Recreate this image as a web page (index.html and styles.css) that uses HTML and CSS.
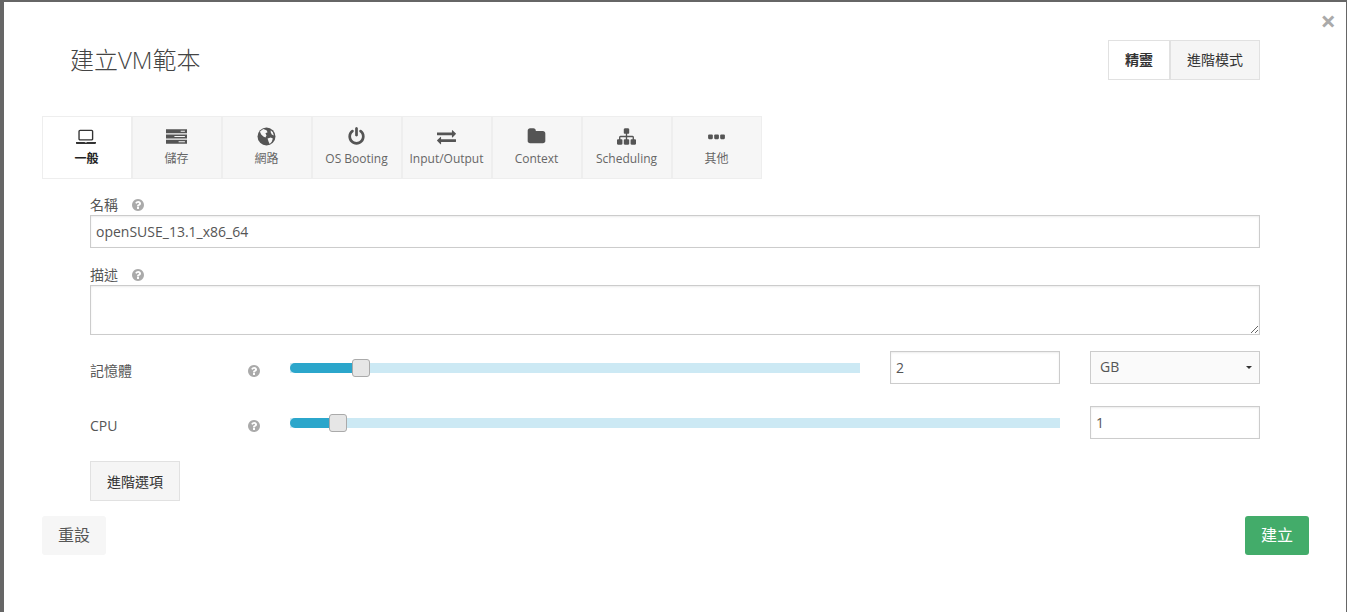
FILE: index.html
```html
<!DOCTYPE html>
<html lang="zh-Hant">
<head>
    <meta charset="UTF-8" />
    <title>建立VM範本</title>
    <link rel="stylesheet" href="styles.css">
</head>
<body>
    <div class="modal">
        <button class="close-btn" type="button">×</button>

        <div class="header">
            <h1>建立VM範本</h1>
            <div class="mode-switch">
                <button class="mode-btn active" type="button">精靈</button>
                <button class="mode-btn" type="button">進階模式</button>
            </div>
        </div>

        <ul class="tabs">
            <li class="tab active">
                <svg class="tab-icon" viewBox="0 0 1920 1792"><path d="M352 1280q-66 0-113-47t-47-113v-704q0-66 47-113t113-47h1088q66 0 113 47t47 113v704q0 66-47 113t-113 47h-1088zm-32-864v704q0 13 9.5 22.5t22.5 9.5h1088q13 0 22.5-9.5t9.5-22.5v-704q0-13-9.5-22.5t-22.5-9.5h-1088q-13 0-22.5 9.5t-9.5 22.5zm1376 992h160v96q0 40-47 68t-113 28h-1600q-66 0-113-28t-47-68v-96h1760zm-720 96q16 0 16-16t-16-16h-160q-16 0-16 16t16 16h160z"/></svg>
                <span>一般</span>
            </li>
            <li class="tab">
                <svg class="tab-icon" viewBox="0 0 20 16"><path fill-rule="evenodd" d="M0 1h20v4H0zM0 6h20v4H0zM0 11h20v4H0zM14 2.500v1h4v-1zM8 7.500v1h10v-1zM12 12.500v1h6v-1z"/></svg>
                <span>儲存</span>
            </li>
            <li class="tab">
                <svg class="tab-icon" viewBox="0 0 18 18"><circle cx="9" cy="9" r="8.500"/><path class="cut" d="M3 4l3-2 3 1 1 2-2 1 1 2-1 2-2-1-2-2-1-2zM10 11l3-1 2 1-1 3-2 2-1-2zM13 3l2 2 1 3-2-1-1-2z"/></svg>
                <span>網路</span>
            </li>
            <li class="tab">
                <svg class="tab-icon" viewBox="0 0 1792 1792"><path d="M1664 896q0 156-61 298t-164 245-245 164-298 61-298-61-245-164-164-245-61-298q0-182 80.500-343t226.500-270q43-32 95.500-25t83.500 50q32 42 24.500 94.500t-49.500 84.500q-98 74-151.500 181t-53.500 228q0 104 40.500 198.500t109.500 163.500 163.500 109.500 198.500 40.500 198.500-40.500 163.500-109.500 109.500-163.500 40.500-198.500q0-121-53.500-228t-151.500-181q-42-32-49.500-84.500t24.500-94.500q31-43 84-50t95 25q146 109 226.500 270t80.500 343zm-640-768v640q0 52-38 90t-90 38-90-38-38-90v-640q0-52 38-90t90-38 90 38 38 90z"/></svg>
                <span>OS Booting</span>
            </li>
            <li class="tab">
                <svg class="tab-icon" viewBox="0 0 1792 1792"><path d="M1792 1184v192q0 13-9.500 22.500t-22.500 9.500h-1376v192q0 13-9.500 22.500t-22.500 9.500q-12 0-24-10l-319-320q-9-9-9-22 0-14 9-23l320-320q9-9 23-9 13 0 22.500 9.500t9.500 22.500v192h1376q13 0 22.500 9.500t9.500 22.500zm0-544q0 14-9 23l-320 320q-9 9-23 9-13 0-22.500-9.500t-9.500-22.500v-192h-1376q-13 0-22.500-9.500t-9.500-22.500v-192q0-13 9.500-22.500t22.500-9.500h1376v-192q0-14 9-23t23-9q12 0 24 10l319 319q9 9 9 23z"/></svg>
                <span>Input/Output</span>
            </li>
            <li class="tab">
                <svg class="tab-icon" viewBox="0 0 1792 1792"><path d="M1728 608v704q0 92-66 158t-158 66h-1216q-92 0-158-66t-66-158v-960q0-92 66-158t158-66h320q92 0 158 66t66 158v32h672q92 0 158 66t66 158z"/></svg>
                <span>Context</span>
            </li>
            <li class="tab">
                <svg class="tab-icon" viewBox="0 0 1792 1792"><path d="M1792 1248v320q0 40-28 68t-68 28h-320q-40 0-68-28t-28-68v-320q0-40 28-68t68-28h96v-192h-512v192h96q40 0 68 28t28 68v320q0 40-28 68t-68 28h-320q-40 0-68-28t-28-68v-320q0-40 28-68t68-28h96v-192h-512v192h96q40 0 68 28t28 68v320q0 40-28 68t-68 28h-320q-40 0-68-28t-28-68v-320q0-40 28-68t68-28h96v-192q0-52 38-90t90-38h512v-192h-96q-40 0-68-28t-28-68v-320q0-40 28-68t68-28h320q40 0 68 28t28 68v320q0 40-28 68t-68 28h-96v192h512q52 0 90 38t38 90v192h96q40 0 68 28t28 68z"/></svg>
                <span>Scheduling</span>
            </li>
            <li class="tab">
                <svg class="tab-icon" viewBox="0 0 20 16"><rect x="2" y="6" width="4.500" height="4.500" rx="1"/><rect x="7.800" y="6" width="4.500" height="4.500" rx="1"/><rect x="13.500" y="6" width="4.500" height="4.500" rx="1"/></svg>
                <span>其他</span>
            </li>
        </ul>

        <form class="vm-form">
            <label class="field-label"><span class="label-text">名稱</span>
                <svg class="help" viewBox="128 128 1536 1536"><path d="M1024 1376v-192q0-14-9-23t-23-9h-192q-14 0-23 9t-9 23v192q0 14 9 23t23 9h192q14 0 23-9t9-23zm256-672q0-88-55.500-163t-138.500-116-170-41q-243 0-371 213-15 24 8 42l132 100q7 6 19 6 16 0 25-12 53-68 86-92 34-24 86-24 48 0 85.500 26t37.500 59q0 38-20 61t-68 45q-63 28-115.500 86.500t-52.500 125.500v36q0 14 9 23t23 9h192q14 0 23-9t9-23q0-19 21.500-49.500t54.500-49.500q32-18 49-28.500t46-35 44.500-48 28-60.500 12.500-81zm384 192q0 209-103 385.500t-279.500 279.500-385.500 103-385.500-103-279.500-279.500-103-385.500 103-385.500 279.500-279.500 385.500-103 385.500 103 279.500 279.500 103 385.500z"/></svg>
            </label>
            <input class="text-input name-input" type="text" value="openSUSE_13.1_x86_64" />

            <label class="field-label"><span class="label-text">描述</span>
                <svg class="help" viewBox="128 128 1536 1536"><path d="M1024 1376v-192q0-14-9-23t-23-9h-192q-14 0-23 9t-9 23v192q0 14 9 23t23 9h192q14 0 23-9t9-23zm256-672q0-88-55.500-163t-138.500-116-170-41q-243 0-371 213-15 24 8 42l132 100q7 6 19 6 16 0 25-12 53-68 86-92 34-24 86-24 48 0 85.500 26t37.500 59q0 38-20 61t-68 45q-63 28-115.500 86.500t-52.500 125.500v36q0 14 9 23t23 9h192q14 0 23-9t9-23q0-19 21.500-49.500t54.500-49.500q32-18 49-28.500t46-35 44.500-48 28-60.500 12.500-81zm384 192q0 209-103 385.500t-279.500 279.500-385.500 103-385.500-103-279.500-279.500-103-385.500 103-385.500 279.500-279.500 385.500-103 385.500 103 279.500 279.500 103 385.500z"/></svg>
            </label>
            <textarea class="text-input desc-input"></textarea>

            <div class="slider-row">
                <div class="row-label">
                    <span class="label-text">記憶體</span>
                    <svg class="help" viewBox="128 128 1536 1536"><path d="M1024 1376v-192q0-14-9-23t-23-9h-192q-14 0-23 9t-9 23v192q0 14 9 23t23 9h192q14 0 23-9t9-23zm256-672q0-88-55.500-163t-138.500-116-170-41q-243 0-371 213-15 24 8 42l132 100q7 6 19 6 16 0 25-12 53-68 86-92 34-24 86-24 48 0 85.500 26t37.500 59q0 38-20 61t-68 45q-63 28-115.500 86.500t-52.500 125.500v36q0 14 9 23t23 9h192q14 0 23-9t9-23q0-19 21.500-49.500t54.500-49.500q32-18 49-28.500t46-35 44.500-48 28-60.500 12.500-81zm384 192q0 209-103 385.500t-279.500 279.500-385.500 103-385.500-103-279.500-279.500-103-385.500 103-385.500 279.500-279.500 385.500-103 385.500 103 279.500 279.500 103 385.500z"/></svg>
                </div>
                <div class="slider">
                    <div class="slider-fill" style="width: 71px"></div>
                    <div class="slider-handle" style="left: 62px"></div>
                </div>
                <input class="text-input num-input" type="text" value="2" />
                <div class="select-wrap">
                    <select class="unit-select"><option>GB</option><option>MB</option></select>
                    <span class="caret"></span>
                </div>
            </div>

            <div class="slider-row">
                <div class="row-label">
                    <span>CPU</span>
                    <svg class="help" viewBox="128 128 1536 1536"><path d="M1024 1376v-192q0-14-9-23t-23-9h-192q-14 0-23 9t-9 23v192q0 14 9 23t23 9h192q14 0 23-9t9-23zm256-672q0-88-55.500-163t-138.500-116-170-41q-243 0-371 213-15 24 8 42l132 100q7 6 19 6 16 0 25-12 53-68 86-92 34-24 86-24 48 0 85.500 26t37.500 59q0 38-20 61t-68 45q-63 28-115.500 86.500t-52.500 125.500v36q0 14 9 23t23 9h192q14 0 23-9t9-23q0-19 21.500-49.500t54.500-49.500q32-18 49-28.500t46-35 44.500-48 28-60.500 12.500-81zm384 192q0 209-103 385.500t-279.500 279.500-385.500 103-385.500-103-279.500-279.500-103-385.500 103-385.500 279.500-279.500 385.500-103 385.500 103 279.500 279.500 103 385.500z"/></svg>
                </div>
                <div class="slider slider-wide">
                    <div class="slider-fill" style="width: 48px"></div>
                    <div class="slider-handle" style="left: 39px"></div>
                </div>
                <input class="text-input num-input" type="text" value="1" />
            </div>

            <button class="plain-btn" type="button">進階選項</button>
        </form>

        <div class="footer">
            <button class="reset-btn" type="button">重設</button>
            <button class="create-btn" type="button">建立</button>
        </div>
    </div>
</body>
</html>
```

FILE: styles.css
```css
* {
    box-sizing: border-box;
    margin: 0;
    padding: 0;
}

html,
body {
    height: 612px;
    overflow: hidden;
}

body {
    font-family: 'Open Sans', 'Noto Sans CJK TC', sans-serif;
    font-size: 14px;
    color: #555555;
    background: #666666;
    padding: 2px 1px 0 4px;
}

.modal {
    position: relative;
    background: #ffffff;
    height: 610px;
    padding: 38px 37px 0 38px;
}

.close-btn {
    position: absolute;
    top: 5px;
    right: 10px;
    border: none;
    background: none;
    font-family: 'Open Sans', sans-serif;
    font-size: 27px;
    line-height: 28px;
    font-weight: 700;
    color: #aaaaaa;
}

.header {
    display: flex;
    justify-content: space-between;
    align-items: center;
    height: 40px;
    padding: 0 0 0 28px;
    margin-right: 49px;
}

h1 {
    font-size: 24px;
    font-weight: 300;
    color: #444444;
    margin-top: -4px;
}

.mode-switch {
    display: flex;
}

.mode-btn {
    height: 40px;
    padding: 0 16px 2px;
    font-family: inherit;
    font-size: 14px;
    color: #333333;
    background: #f5f5f5;
    border: 1px solid #e1e1e1;
}

.mode-btn.active {
    background: #ffffff;
    font-weight: 700;
}

.tabs {
    display: flex;
    list-style: none;
    margin-top: 36px;
}

.tab {
    width: 90px;
    height: 63px;
    display: flex;
    flex-direction: column;
    align-items: center;
    background: #f6f6f6;
    border: 1px solid #eeeeee;
    font-size: 12px;
    color: #666666;
    padding: 10px 1px 0 0;
}

.tab span {
    margin-top: 4px;
    line-height: 17px;
    white-space: nowrap;
}

.tab.active {
    background: #ffffff;
    color: #222222;
    font-weight: 700;
}

.tab-icon {
    width: 21px;
    height: 19px;
    fill: #555555;
}

.tab.active .tab-icon {
    fill: #333333;
}

.tab-icon .cut {
    fill: #f6f6f6;
}

.vm-form {
    padding: 16px 0 0 48px;
    margin-right: 49px;
}

.field-label {
    display: flex;
    align-items: center;
    gap: 14px;
    height: 20px;
    font-size: 14px;
    color: #555555;
}

.label-text {
    margin-top: -2px;
}

.help {
    width: 12px;
    height: 12px;
    fill: #aaaaaa;
}

.text-input {
    display: block;
    width: 100%;
    font-family: inherit;
    font-size: 14px;
    color: #555555;
    background: #ffffff;
    border: 1px solid #cccccc;
    box-shadow: inset 0 1px 2px rgba(0, 0, 0, 0.08);
    padding: 0 5px;
    outline: none;
}

.name-input {
    height: 33px;
    margin-bottom: 17px;
}

.desc-input {
    height: 50px;
    margin-bottom: 16px;
    resize: vertical;
}

.slider-row {
    display: grid;
    grid-template-columns: 170px 570px 170px 170px;
    column-gap: 30px;
    align-items: center;
    height: 33px;
    margin-bottom: 22px;
}

.row-label {
    display: flex;
    justify-content: space-between;
    align-items: center;
    font-size: 14px;
    padding-top: 6px;
}

.slider {
    position: relative;
    height: 10px;
    background: #cce9f4;
}

.slider-wide {
    grid-column: span 2;
}

.slider-fill {
    height: 100%;
    background: #2ba6cb;
    border-radius: 5px 0 0 5px;
}

.slider-handle {
    position: absolute;
    top: -4px;
    width: 18px;
    height: 18px;
    background: #e6e6e6;
    border: 1px solid #aaaaaa;
    border-radius: 3px;
}

.num-input {
    height: 33px;
}

.select-wrap {
    position: relative;
}

.unit-select {
    display: block;
    width: 100%;
    height: 33px;
    appearance: none;
    font-family: inherit;
    font-size: 14px;
    color: #555555;
    background: #fafafa;
    border: 1px solid #cccccc;
    padding: 0 9px 2px;
    outline: none;
}

.caret {
    position: absolute;
    top: 15px;
    right: 8px;
    border-style: solid;
    border-width: 3px 3px 0;
    border-color: #333333 transparent transparent;
}

.plain-btn {
    display: block;
    height: 40px;
    width: 90px;
    font-family: inherit;
    font-size: 14px;
    color: #333333;
    background: #f5f5f5;
    border: 1px solid #e1e1e1;
}

.footer {
    display: flex;
    justify-content: space-between;
    margin-top: 15px;
}

.reset-btn,
.create-btn {
    width: 64px;
    height: 39px;
    padding-bottom: 3px;
    font-family: inherit;
    font-size: 16px;
    border: none;
    border-radius: 3px;
}

.reset-btn {
    color: #555555;
    background: #f6f6f6;
}

.create-btn {
    color: #ffffff;
    background: #43ac6a;
}
```
